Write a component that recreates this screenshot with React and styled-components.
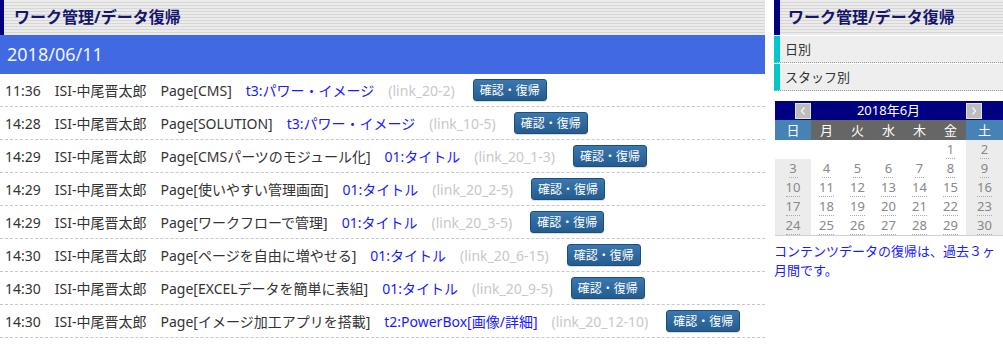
import React from 'react'
import styled, { createGlobalStyle } from 'styled-components'

/*---> Data <---*/
const rows = [
  { time: '11:36', page: 'Page[CMS]', title: 't3:パワー・イメージ', link: '(link_20-2)' },
  { time: '14:28', page: 'Page[SOLUTION]', title: 't3:パワー・イメージ', link: '(link_10-5)' },
  { time: '14:29', page: 'Page[CMSパーツのモジュール化]', title: '01:タイトル', link: '(link_20_1-3)' },
  { time: '14:29', page: 'Page[使いやすい管理画面]', title: '01:タイトル', link: '(link_20_2-5)' },
  { time: '14:29', page: 'Page[ワークフローで管理]', title: '01:タイトル', link: '(link_20_3-5)' },
  { time: '14:30', page: 'Page[ページを自由に増やせる]', title: '01:タイトル', link: '(link_20_6-15)' },
  { time: '14:30', page: 'Page[EXCELデータを簡単に表組]', title: '01:タイトル', link: '(link_20_9-5)' },
  { time: '14:30', page: 'Page[イメージ加工アプリを搭載]', title: 't2:PowerBox[画像/詳細]', link: '(link_20_12-10)' },
]

const weeks = [
  [null, null, null, null, null, 1, 2],
  [3, 4, 5, 6, 7, 8, 9],
  [10, 11, 12, 13, 14, 15, 16],
  [17, 18, 19, 20, 21, 22, 23],
  [24, 25, 26, 27, 28, 29, 30],
]

const dayNames = ['日', '月', '火', '水', '木', '金', '土']

/*---> Component <---*/
export default function App() {
  return (
    <>
      <GlobalStyle />
      <Page>
        <Main>
          <Heading $bar={4} $pad={10}>ワーク管理/データ復帰</Heading>
          <DateBar>2018/06/11</DateBar>
          {rows.map((r, i) => (
            <Row key={i}>
              <Item>{r.time}</Item>
              <Item>ISI-中尾晋太郎</Item>
              <Item>{r.page}</Item>
              <Item $link>{r.title}</Item>
              <Item $muted>{r.link}</Item>
              <RestoreButton>確認・復帰</RestoreButton>
            </Row>
          ))}
        </Main>

        <Side>
          <Heading $bar={6} $pad={8}>ワーク管理/データ復帰</Heading>
          <Menu>
            <MenuItem>日別</MenuItem>
            <MenuItem>スタッフ別</MenuItem>
          </Menu>

          <Calendar>
            <NavCell $align='flex-end'>
              <NavButton>
                <svg width='8' height='10' viewBox='0 0 8 10'>
                  <polyline points='5.5,1.5 2.5,5 5.5,8.5' fill='none' stroke='#f4f4f4' strokeWidth='1.3' />
                </svg>
              </NavButton>
            </NavCell>
            <MonthCell>2018年6月</MonthCell>
            <NavCell $align='flex-start'>
              <NavButton>
                <svg width='8' height='10' viewBox='0 0 8 10'>
                  <polyline points='2.5,1.5 5.5,5 2.5,8.5' fill='none' stroke='#f4f4f4' strokeWidth='1.3' />
                </svg>
              </NavButton>
            </NavCell>

            {dayNames.map((d, i) => (
              <DayName key={d} $weekend={i === 0 || i === 6}>{d}</DayName>
            ))}

            {weeks.map((w, wi) =>
              w.map((n, di) => (
                <DateCell key={`${wi}-${di}`} $weekend={n !== null && (di === 0 || di === 6)}>
                  {n !== null && <DateNum>{n}</DateNum>}
                </DateCell>
              ))
            )}
          </Calendar>

          <Note>コンテンツデータの復帰は、過去３ヶ月間です。</Note>
        </Side>
      </Page>
    </>
  )
}

/*---> Styles <---*/
const GlobalStyle = createGlobalStyle`
  body {
    margin: 0;
    background: #fff;
    color: #333;
    font-family: "Noto Sans", "Noto Sans CJK JP", sans-serif;
  }
`

const Page = styled.div`
  display: flex;
  gap: 9px;
  width: 1003px;
`

const Main = styled.div`
  width: 765px;
  flex: none;
`

const Side = styled.div`
  width: 229px;
  flex: none;
`

const Heading = styled.h2`
  margin: 0;
  height: 35px;
  box-sizing: border-box;
  border-left: ${p => p.$bar}px solid #000080;
  padding-left: ${p => p.$pad}px;
  background: repeating-linear-gradient(to bottom, #ebebeb 0 2px, #d6d6d6 2px 3px);
  color: #15156e;
  font-size: 16px;
  font-weight: bold;
  line-height: 34px;
  white-space: nowrap;
`

const DateBar = styled.div`
  height: 39px;
  background: #4169e1;
  color: #f0f4ff;
  font-size: 18px;
  line-height: 39px;
  padding-left: 7px;
`

const Row = styled.div`
  display: flex;
  align-items: center;
  gap: 14px;
  height: 32px;
  padding-left: 5px;
  border-bottom: 1px dashed #c8c8c8;
  font-size: 14px;
  white-space: nowrap;
`

const Item = styled.span`
  color: ${p => (p.$link ? '#1a1aff' : p.$muted ? '#c8c8c8' : '#333')};
`

const RestoreButton = styled.button`
  margin-left: 4px;
  height: 22px;
  padding: 0 6px;
  border: 1px solid #1d4d7a;
  border-radius: 3px;
  background: linear-gradient(to bottom, #3a78b0, #245c8e);
  color: #fff;
  font-family: "Noto Sans CJK JP", sans-serif;
  font-size: 12px;
  line-height: 20px;
  box-shadow: 0 1px 1px rgba(0, 0, 0, 0.15);
`

const Menu = styled.div`
  margin-top: 1px;
`

const MenuItem = styled.div`
  height: 26px;
  margin-bottom: 1px;
  border-left: 6px solid #00c8c8;
  border-bottom: 1px dotted #999;
  background: #eeeeee;
  padding-left: 5px;
  color: #333;
  font-size: 13px;
  line-height: 26px;
`

const Calendar = styled.div`
  display: grid;
  grid-template-columns: 36px repeat(5, 31px) 37px;
  grid-template-rows: 19px 20px repeat(5, 19px);
  margin: 10px 0 0 1px;
  border-bottom: 1px solid #d0d0d0;
  width: 228px;
`

const NavCell = styled.div`
  display: flex;
  align-items: center;
  justify-content: ${p => p.$align};
  background: #000080;
`

const NavButton = styled.span`
  display: flex;
  align-items: center;
  justify-content: center;
  width: 14px;
  height: 14px;
  background: #bdbdbd;
  border: 1px solid #e2e2e2;
`

const MonthCell = styled.div`
  grid-column: span 5;
  background: #000080;
  color: #fff;
  font-size: 13px;
  line-height: 19px;
  text-align: center;
`

const DayName = styled.div`
  background: ${p => (p.$weekend ? '#4682b4' : '#666')};
  color: #fff;
  font-size: 13px;
  line-height: 20px;
  text-align: center;
`

const DateCell = styled.div`
  background: ${p => (p.$weekend ? '#ececec' : '#fff')};
  text-align: center;
  line-height: 17px;
`

const DateNum = styled.span`
  display: inline-block;
  min-width: 9px;
  border-bottom: 1px dotted #aaa;
  color: #888;
  font-size: 13px;
`

const Note = styled.p`
  margin: 6px 0 0;
  color: #1a1aff;
  font-size: 13px;
  line-height: 19px;
`
